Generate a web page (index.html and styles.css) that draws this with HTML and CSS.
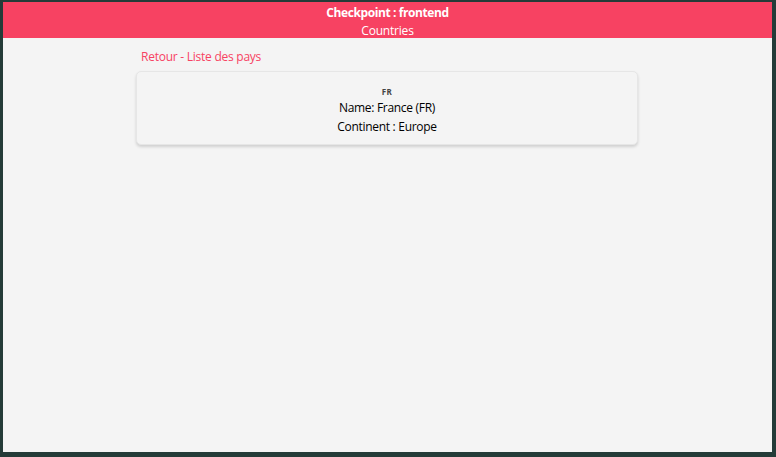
FILE: index.html
```html
<!DOCTYPE html>
<html lang="fr">
<head>
<meta charset="utf-8">
<title>Checkpoint : frontend</title>
<link rel="stylesheet" href="styles.css">
</head>
<body>
<div class="frame">
  <header class="topbar">
    <div class="title">Checkpoint : frontend</div>
    <div class="subtitle">Countries</div>
  </header>
  <main class="content">
    <a class="back" href="#">Retour - Liste des pays</a>
    <section class="card">
      <div class="code">FR</div>
      <div class="line">Name: France (FR)</div>
      <div class="line">Continent : Europe</div>
    </section>
  </main>
</div>
</body>
</html>
```
FILE: styles.css
```css
html, body {
  margin: 0;
  padding: 0;
  height: 100%;
}
body {
  background: #243b38;
  font-family: "Open Sans", "Noto Sans", sans-serif;
  padding: 2px 4px 5px 3px;
  box-sizing: border-box;
}
.frame {
  background: #f4f4f4;
  height: 100%;
  display: flex;
  flex-direction: column;
}
.topbar {
  background: #f74262;
  color: #fff;
  text-align: center;
  height: 36px;
  box-sizing: border-box;
  padding-top: 2px;
  font-size: 12px;
  line-height: 18px;
  letter-spacing: -0.2px;
}
.title {
  font-weight: 700;
  letter-spacing: -0.4px;
}
.content {
  width: 502px;
  margin-left: 133px;
  padding-top: 10px;
  display: flex;
  flex-direction: column;
}
.back {
  color: #f74262;
  text-decoration: none;
  font-size: 12px;
  line-height: 18px;
  letter-spacing: -0.25px;
  padding-left: 5px;
}
.card {
  margin-top: 5px;
  background: #f4f4f4;
  border: 1px solid #e6e6e6;
  border-radius: 5px;
  box-shadow: 0 2px 3px rgba(0,0,0,0.15);
  text-align: center;
  padding: 14px 0 8px;
  color: #000;
  font-size: 12px;
  line-height: 19px;
  letter-spacing: -0.3px;
}
.code {
  font-size: 8px;
  font-weight: 700;
  color: #444;
  line-height: 12px;
  letter-spacing: 0.3px;
}
```
